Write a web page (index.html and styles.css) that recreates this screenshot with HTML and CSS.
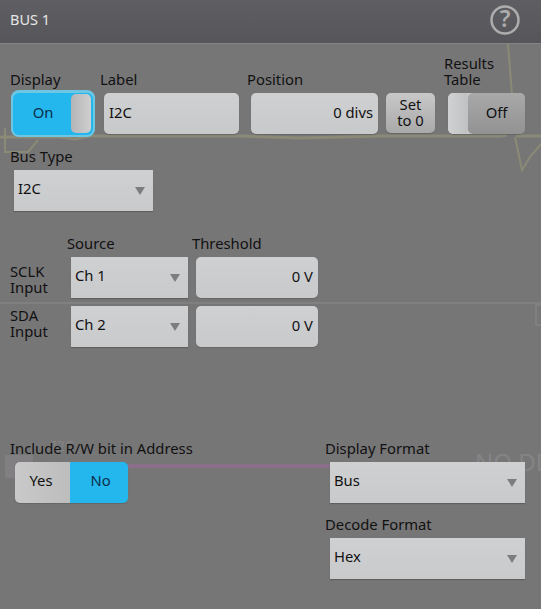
FILE: index.html
```html
<!DOCTYPE html>
<html lang="en">
<head>
  <meta charset="UTF-8">
  <title>BUS 1</title>
  <link rel="stylesheet" href="styles.css">
</head>
<body>
  <div class="panel">
    <!-- scope traces showing through the panel -->
    <svg class="traces" width="541" height="609" viewBox="0 0 541 609">
      <path class="trace-olive" d="M0 137H60L75 139L90 136H240L300 138L380 136H500L507 135M516 136H541"/>
      <path class="trace-olive thin" d="M508 44L512 95M515 137L522 170L530 157L541 144M5 128V152H28L38 140"/>
      <path class="trace-pink" d="M6 466H330"/>
      <path class="trace-grey" d="M0 303H541"/>
      <path class="trace-grey" d="M541 305H536V325H541"/>
      <rect class="ghost-box" x="5" y="455" width="28" height="23" rx="2"/>
      <text class="ghost-text" x="52" y="451">I2C</text>
      <text class="ghost-text big" x="475" y="471">NO DE</text>
    </svg>

    <div class="header">
      <span class="title">BUS 1</span>
      <svg class="help" width="32" height="32" viewBox="0 0 32 32">
        <circle cx="16" cy="16" r="13.5"/>
        <text x="16" y="23" text-anchor="middle">?</text>
      </svg>
    </div>

    <div class="top-row">
      <div class="field display-field">
        <label>Display</label>
        <div class="toggle on">
          <span class="toggle-text">On</span>
          <span class="knob"></span>
        </div>
      </div>
      <div class="field label-field">
        <label>Label</label>
        <div class="input">I2C</div>
      </div>
      <div class="field position-field">
        <label>Position</label>
        <div class="input right">0 divs</div>
      </div>
      <button class="set-btn">Set<br>to 0</button>
      <div class="field results-field">
        <label>Results<br>Table</label>
        <div class="toggle off">
          <span class="knob"></span>
          <span class="toggle-text">Off</span>
        </div>
      </div>
    </div>

    <div class="field bus-type">
      <label>Bus Type</label>
      <div class="select">I2C<i class="arrow"></i></div>
    </div>

    <div class="inputs">
      <span></span>
      <label>Source</label>
      <label>Threshold</label>

      <label class="row-label sclk">SCLK<br>Input</label>
      <div class="select">Ch 1<i class="arrow"></i></div>
      <div class="input right">0 V</div>

      <label class="row-label sda">SDA<br>Input</label>
      <div class="select">Ch 2<i class="arrow"></i></div>
      <div class="input right">0 V</div>
    </div>

    <div class="bottom">
      <div class="field rw-field">
        <label>Include R/W bit in Address</label>
        <div class="segment">
          <span class="seg yes">Yes</span>
          <span class="seg no">No</span>
        </div>
      </div>
      <div class="formats">
        <div class="field">
          <label>Display Format</label>
          <div class="select">Bus<i class="arrow"></i></div>
        </div>
        <div class="field">
          <label>Decode Format</label>
          <div class="select">Hex<i class="arrow"></i></div>
        </div>
      </div>
    </div>
  </div>
</body>
</html>
```

FILE: styles.css
```css
html, body {
  margin: 0;
  padding: 0;
}
body {
  font-family: "Noto Sans", "Open Sans", sans-serif;
  font-size: 14.8px;
  color: #111;
}
.panel {
  position: relative;
  width: 541px;
  height: 609px;
  overflow: hidden;
  background: #777677;
}
.traces {
  position: absolute;
  left: 0;
  top: 0;
}
.trace-olive {
  fill: none;
  stroke: #8a8a77;
  stroke-width: 3;
}
.trace-olive.thin {
  stroke-width: 2;
}
.trace-pink {
  fill: none;
  stroke: #8b6f8a;
  stroke-width: 4;
}
.trace-grey {
  fill: none;
  stroke: #858485;
  stroke-width: 1.5;
}
.ghost-box {
  fill: #827f83;
}
.ghost-text {
  fill: #858485;
  font-size: 14px;
}
.ghost-text.big {
  font-size: 24px;
}

.header {
  position: relative;
  height: 44px;
  box-sizing: border-box;
  display: flex;
  align-items: center;
  justify-content: space-between;
  padding: 0 20px 6px 10px;
  background: linear-gradient(#5f5e63, #565559);
  border-bottom: 1px solid #858485;
}
.title {
  color: #e6e6e6;
  font-size: 14.5px;
}
.help {
  margin-top: 2px;
}
.help circle {
  fill: none;
  stroke: #adadad;
  stroke-width: 2.5;
}
.help text {
  fill: #adadad;
  font-size: 23px;
  font-weight: 600;
}

.field, .inputs, .top-row, .bottom {
  position: relative;
}
.field {
  display: flex;
  flex-direction: column;
  align-items: flex-start;
}
label {
  display: block;
  line-height: 16px;
  margin-bottom: 6px;
}

.top-row {
  display: flex;
  align-items: flex-end;
  margin-top: 11px;
  padding-left: 10px;
}
.display-field {
  width: 90px;
}
.label-field {
  width: 147px;
}
.position-field {
  width: 131px;
}
.results-field {
  margin-left: 9px;
}

.input {
  box-sizing: border-box;
  height: 41px;
  line-height: 39px;
  padding: 0 5px;
  background: linear-gradient(#cfd0d2, #c8c9cb);
  border-radius: 5px;
  box-shadow: 0 1px 1px #666;
}
.input.right {
  text-align: right;
}
.label-field .input {
  width: 135px;
  margin-left: 4px;
}
.position-field .input {
  width: 127px;
  margin-left: 4px;
}

.toggle {
  display: flex;
  box-sizing: border-box;
  height: 41px;
  border-radius: 6px;
}
.toggle.on {
  width: 80px;
  height: 42px;
  margin: 0 0 -1px 3px;
  background: #23b7ee;
  box-shadow: 0 0 0 2px #6cc6e4, 0 -1px 0 2px #6cc6e4;
  color: #0d2f4a;
}
.toggle.on .toggle-text {
  flex: 1;
  padding-left: 2px;
  line-height: 39px;
  text-align: center;
}
.toggle.on .knob {
  width: 20px;
  margin: 1px 2px 2px 0;
}
.knob {
  display: block;
  background: linear-gradient(90deg, #b4b5b6, #cfcfd0);
  border-radius: 5px;
}
.toggle.off {
  width: 77px;
  margin-left: 4px;
  background: #c6c7c8;
  box-shadow: 0 1px 1px #666;
}
.toggle.off .knob {
  width: 20px;
  background: linear-gradient(90deg, #d0d1d2, #c0c1c2);
}
.toggle.off .toggle-text {
  flex: 1;
  line-height: 39px;
  text-align: center;
  border-radius: 5px;
  background: linear-gradient(#a9a9aa, #929293);
}

.set-btn {
  width: 49px;
  height: 40px;
  margin: 0 0 1px 8px;
  padding: 0 0 2px;
  border: 0;
  border-radius: 5px;
  font: inherit;
  line-height: 16px;
  color: inherit;
  background: linear-gradient(#c8c8c9, #a9a9aa);
  box-shadow: 0 1px 1px #666;
}

.select {
  position: relative;
  box-sizing: border-box;
  height: 41px;
  line-height: 37px;
  padding: 0 4px;
  background: linear-gradient(#cfd0d2, #c9cacc);
  box-shadow: 0 1px 1px #5f5f5f;
}
.arrow {
  position: absolute;
  right: 8px;
  top: 17px;
  width: 0;
  height: 0;
  border-left: 5px solid transparent;
  border-right: 5px solid transparent;
  border-top: 8px solid #7d7d7e;
}

.bus-type {
  margin: 14px 0 0 10px;
}
.bus-type .select {
  width: 139px;
  margin-left: 4px;
}

.inputs {
  display: grid;
  grid-template-columns: 57px 125px 126px;
  grid-auto-rows: auto;
  row-gap: 8px;
  margin-top: 24px;
  padding-left: 10px;
}
.inputs > label {
  margin-bottom: -2px;
}
.inputs .select {
  width: 117px;
  margin-left: 4px;
}
.inputs .input {
  width: 122px;
  margin-left: 4px;
}
.inputs .row-label.sclk {
  margin: 6px 0 0;
}
.inputs .row-label.sda {
  margin: 1px 0 0;
}

.bottom {
  display: flex;
  margin-top: 93px;
  padding-left: 10px;
}
.rw-field {
  width: 315px;
}
.segment {
  display: flex;
  width: 113px;
  height: 41px;
  margin-left: 5px;
  border-radius: 5px;
  overflow: hidden;
  box-shadow: 0 1px 1px #666;
}
.seg {
  line-height: 37px;
  text-align: center;
}
.seg.yes {
  width: 55px;
  padding-right: 3px;
  box-sizing: border-box;
  background: linear-gradient(90deg, #c9c9ca, #bdbdbe);
}
.seg.no {
  flex: 1;
  padding-left: 3px;
  background: #23b7ee;
  color: #0d2f4a;
}
.formats {
  display: flex;
  flex-direction: column;
  gap: 13px;
}
.formats .select {
  width: 195px;
  margin-left: 5px;
}
```
